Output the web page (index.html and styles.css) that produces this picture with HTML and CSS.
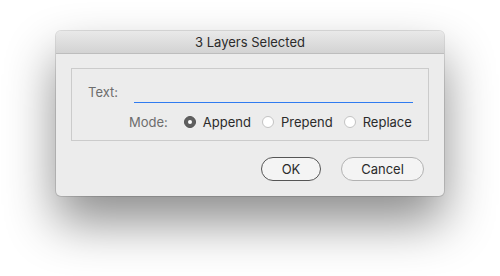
FILE: index.html
```html
<!DOCTYPE html>
<html>
<head>
<meta charset="utf-8">
<link rel="stylesheet" href="styles.css">
</head>
<body>
<div class="dialog">
  <div class="titlebar">3 Layers Selected</div>
  <div class="content">
    <div class="group">
      <div class="row text-row">
        <span class="label">Text:</span>
        <div class="field"></div>
      </div>
      <div class="row mode-row">
        <span class="label">Mode:</span>
        <label class="radio"><span class="dot on"></span>Append</label>
        <label class="radio"><span class="dot"></span>Prepend</label>
        <label class="radio"><span class="dot"></span>Replace</label>
      </div>
    </div>
    <div class="buttons">
      <button class="btn ok">OK</button>
      <button class="btn cancel">Cancel</button>
    </div>
  </div>
</div>
</body>
</html>
```
FILE: styles.css
```css
html, body {
  margin: 0;
  padding: 0;
  background: #ffffff;
}
body {
  width: 500px;
  height: 276px;
  overflow: hidden;
  padding-top: 31px;
  box-sizing: border-box;
  font-family: Inter, "Liberation Sans", sans-serif;
  font-size: 13px;
}
.dialog {
  margin-left: 56px;
  width: 388px;
  height: 165px;
  background: #ececec;
  border-radius: 5px;
  box-shadow: 0 0 0 1px rgba(0,0,0,0.12), 0 26px 50px rgba(0,0,0,0.45);
  overflow: hidden;
}
.titlebar {
  height: 22px;
  line-height: 23px;
  text-align: center;
  color: #2b2b2b;
  background: linear-gradient(#e9e9e9, #d3d3d3);
  border-bottom: 1px solid #bdbdbd;
  box-sizing: content-box;
}
.content {
  padding: 14px 15px 15px 15px;
}
.group {
  height: 71px;
  border: 1px solid #cbcbcb;
  background: #ececec;
  box-sizing: content-box;
  padding: 0 15px 0 16px;
}
.row {
  display: flex;
  align-items: center;
}
.label {
  color: #6d6d6d;
}
.text-row {
  margin-top: 15px;
  height: 20px;
  align-items: flex-start;
}
.field {
  margin-left: 16px;
  flex: 1;
  height: 18px;
  border-bottom: 1px solid #2f7bf0;
}
.mode-row {
  margin-top: 8px;
  margin-left: 41px;
  height: 20px;
}
.mode-row .label {
  margin-right: 16px;
}
.radio {
  display: flex;
  align-items: center;
  color: #2b2b2b;
  margin-right: 11px;
}
.radio:last-child {
  margin-right: 0;
}
.dot {
  width: 12px;
  height: 12px;
  border-radius: 50%;
  box-sizing: border-box;
  border: 1px solid #c3c3c3;
  background: #ffffff;
  margin-right: 7px;
  position: relative;
}
.dot.on {
  background: #5f5f5f;
  border-color: #555555;
}
.dot.on::after {
  content: "";
  position: absolute;
  left: 3px;
  top: 3px;
  width: 4px;
  height: 4px;
  border-radius: 50%;
  background: #ffffff;
}
.buttons {
  display: flex;
  justify-content: flex-end;
  gap: 20px;
  margin-top: 16px;
  padding-right: 5px;
}
.btn {
  font-family: inherit;
  font-size: 13px;
  color: #2b2b2b;
  height: 24px;
  border-radius: 12px;
  background: #f4f4f4;
  padding: 0;
  margin: 0;
}
.ok {
  width: 60px;
  border: 1px solid #555555;
}
.cancel {
  width: 83px;
  border: 1px solid #b2b2b2;
}
```
